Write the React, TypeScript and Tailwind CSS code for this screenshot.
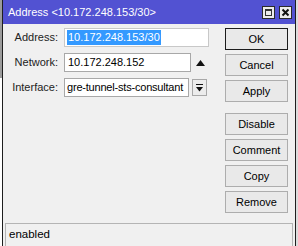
import React from 'react';

const Btn: React.FC<{ label: string; primary?: boolean; className?: string }> = ({ label, primary, className }) => (
  <button
    className={
      'h-[22px] w-full flex items-center justify-center bg-[#e9e9e9] text-black ' +
      (primary ? 'border border-[#1c1c1c] ' : 'border border-[#adadad] ') +
      (className ?? '')
    }
  >
    {label}
  </button>
);

export default function App() {
  return (
    <div className="w-[298px] h-[246px] flex bg-[#f0f0f0] text-[11px] leading-none text-black font-['Liberation_Sans',Arial,sans-serif] overflow-hidden">
      {/* window behind, just peeking out */}
      <div className="w-[2px] flex flex-col">
        <div className="h-[78px] bg-[#9c9c9c]" />
        <div className="flex-1 bg-white" />
      </div>

      <div className="flex-1 flex flex-col border-l border-r border-[#1e1e1e]">
        {/* title bar */}
        <div className="h-[24px] bg-[#5252d2] flex items-center pl-[5px] pr-[3px] text-white text-[11px]">
          <span className="flex-1">Address &lt;10.172.248.153/30&gt;</span>
          <div className="flex gap-[4px]">
            <div className="w-[13px] h-[13px] bg-[#ececec] border border-[#2a2a2a] flex items-center justify-center">
              <div className="w-[7px] h-[7px] border border-t-2 border-[#333]" />
            </div>
            <div className="w-[13px] h-[13px] bg-[#ececec] border border-[#2a2a2a] flex items-center justify-center">
              <svg width="9" height="9" viewBox="0 0 9 9">
                <path d="M1.5 1.5 L7.5 7.5 M7.5 1.5 L1.5 7.5" stroke="#111" strokeWidth="2" />
              </svg>
            </div>
          </div>
        </div>

        {/* body */}
        <div className="flex-1 flex">
          <div className="w-[222px] pt-[4px] flex flex-col gap-[6px]">
            <div className="flex items-center h-[19px]">
              <span className="w-[55px] text-right text-[#222]">Address:</span>
              <div className="ml-[6px] w-[145px] h-[19px] bg-white border border-[#c8c8c8] flex items-center px-[2px]">
                <span className="bg-[#3399ff] text-white px-[1px] py-[2px]">10.172.248.153/30</span>
              </div>
            </div>
            <div className="flex items-center h-[19px]">
              <span className="w-[55px] text-right text-[#222]">Network:</span>
              <div className="ml-[6px] w-[127px] h-[19px] bg-white border border-[#a8a8a8] flex items-center px-[3px]">
                10.172.248.152
              </div>
              <svg className="ml-[5px]" width="9" height="6" viewBox="0 0 9 6">
                <path d="M0 6 L4.5 0 L9 6 Z" fill="#111" />
              </svg>
            </div>
            <div className="flex items-center h-[19px]">
              <span className="w-[55px] text-right text-[#222]">Interface:</span>
              <div className="ml-[6px] w-[125px] h-[19px] bg-white border border-[#a8a8a8] flex items-center px-[2px] whitespace-nowrap overflow-hidden tracking-[-0.2px]">
                gre-tunnel-sts-consultant
              </div>
              <div className="ml-[3px] w-[15px] h-[17px] bg-[#ececec] border border-[#a8a8a8] flex items-center justify-center">
                <svg width="7" height="8" viewBox="0 0 7 8">
                  <path d="M0 0.5 H7" stroke="#111" strokeWidth="1" />
                  <path d="M0 3 L7 3 L3.5 7.5 Z" fill="#111" />
                </svg>
              </div>
            </div>
          </div>

          <div className="w-[63px] pt-[4px] flex flex-col gap-[4px]">
            <Btn label="OK" primary />
            <Btn label="Cancel" />
            <Btn label="Apply" />
            <Btn label="Disable" className="mt-[7px]" />
            <Btn label="Comment" />
            <Btn label="Copy" />
            <Btn label="Remove" />
          </div>
        </div>

        {/* status bar */}
        <div className="h-[23px] mx-[2px] border border-b-0 border-[#b4b4b4] flex items-center px-[3px] text-[11.5px]">
          enabled
        </div>
      </div>

      <div className="w-[2px] bg-[#dcdcdc]" />
    </div>
  );
}
